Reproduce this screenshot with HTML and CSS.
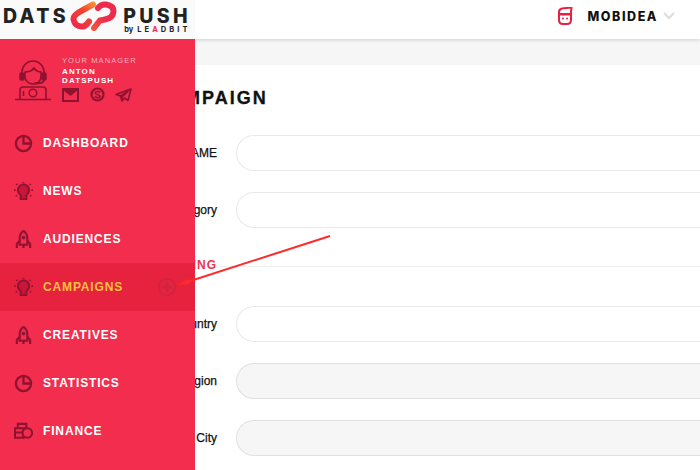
FILE: index.html
```html
<!DOCTYPE html>
<html lang="en">
<head>
<meta charset="utf-8">
<title>DatsPush</title>
<link rel="stylesheet" href="styles.css">
</head>
<body>
<svg class="defs" width="0" height="0" aria-hidden="true">
  <defs>
    <linearGradient id="logoGrad" gradientUnits="userSpaceOnUse" x1="8" y1="26" x2="26" y2="0">
      <stop offset="0" stop-color="#ee2b4c"/>
      <stop offset="0.55" stop-color="#f0432f"/>
      <stop offset="1" stop-color="#f7a23a"/>
    </linearGradient>
    <linearGradient id="logoGrad2" gradientUnits="userSpaceOnUse" x1="22" y1="28" x2="40" y2="0">
      <stop offset="0" stop-color="#f7563a"/>
      <stop offset="0.5" stop-color="#ee2b4c"/>
      <stop offset="1" stop-color="#ee2b4c"/>
    </linearGradient>
    <symbol id="i-pie" viewBox="0 0 20 20">
      <circle cx="10" cy="10" r="8" fill="none" stroke="currentColor" stroke-width="2.400"/>
      <path d="M10 2v8h8" fill="none" stroke="currentColor" stroke-width="2.400"/>
    </symbol>
    <symbol id="i-bulb" viewBox="0 0 20 20">
      <path d="M10 2.500a6 6 0 0 0-3.800 10.500l.8 1v4h6v-4l.8-1A6 6 0 0 0 10 2.500z" fill="#c4173a" stroke="currentColor" stroke-width="2"/>
      <path d="M10 0v1M2.500 2l1 1M17.500 2l-1 1M0 8.500h1.700M18.300 8.500H20M2 15l1-1M18 15l-1-1" stroke="currentColor" stroke-width="1.800" fill="none"/>
    </symbol>
    <symbol id="i-rocket" viewBox="0 0 20 20">
      <path d="M10 1C7 3 6 6 6 9v6.500h8V9c0-3-1-6-4-8z" fill="none" stroke="currentColor" stroke-width="2.200"/>
      <circle cx="10" cy="8" r="1.900" fill="currentColor"/>
      <path d="M6 11.500l-3 3V19M14 11.500l3 3V19M10 15v4" fill="none" stroke="currentColor" stroke-width="2.200"/>
    </symbol>
    <symbol id="i-coins" viewBox="0 0 20 20">
      <path d="M4 2h9v4.500H4zM1 6.500h9V11H1zM1 11h9v5.500H1z" fill="none" stroke="currentColor" stroke-width="2.200"/>
      <circle cx="14" cy="11.500" r="5" fill="#f22d4d" stroke="currentColor" stroke-width="2.200"/>
    </symbol>
  </defs>
</svg>

<header class="topbar">
  <div class="logo">
    <span class="logo-word">DATS</span>
    <svg class="logo-mark" viewBox="0 0 48 30" aria-hidden="true">
      <path d="M24 3.500L13 9.500Q4 14 4.500 18.500Q6 26 14 25.500Q17 25 20 20.500" fill="none" stroke="url(#logoGrad)" stroke-width="6" stroke-linecap="round"/>
      <path d="M29 7Q32 3 37 3.500Q44.500 4.500 44.500 10.500Q44 17 36 18.500L31 19.500L25 27" fill="none" stroke="url(#logoGrad2)" stroke-width="6" stroke-linecap="round"/>
    </svg>
    <div class="logo-right">
      <span class="logo-word">PUSH</span>
      <span class="logo-sub"><span class="by">by</span><span>LE<em>A</em>DBIT</span></span>
    </div>
  </div>
  <div class="account">
    <svg class="ninja" viewBox="0 0 16 18" aria-hidden="true">
      <path d="M2 5c0-2 1-3 3-3.500L14.500.5 14 5v8c0 2.500-1.500 4-4 4H6c-2.500 0-4-1.500-4-4z" fill="none" stroke="#e8203f" stroke-width="2"/>
      <path d="M2 6h12v2.500H2z" fill="#e8203f"/>
      <circle cx="6" cy="11.500" r="1" fill="#e8203f"/>
      <circle cx="10" cy="11.500" r="1" fill="#e8203f"/>
    </svg>
    <span class="account-name">MOBIDEA</span>
    <svg class="chevron" viewBox="0 0 12 8" aria-hidden="true"><path d="M1 1l5 5 5-5" fill="none" stroke="#dcdcdc" stroke-width="2"/></svg>
  </div>
</header>

<main class="content">
  <section class="card">
    <h1 class="title">NEW CAMPAIGN</h1>
    <div class="field"><label class="label">CAMPAIGN NAME</label><div class="input"></div></div>
    <div class="field"><label class="label">Category</label><div class="input"></div></div>
    <div class="section-head"><span class="section-text">TARGETING</span><span class="section-line"></span></div>
    <div class="field"><label class="label">Country</label><div class="input"></div></div>
    <div class="field"><label class="label">Region</label><div class="input input-off"></div></div>
    <div class="field"><label class="label">City</label><div class="input input-off"></div></div>
  </section>
</main>

<aside class="sidebar">
  <div class="manager">
    <svg class="avatar" viewBox="0 0 38 44" aria-hidden="true">
      <g fill="none" stroke="#8f1230" stroke-width="1.600">
        <path d="M8 20v-6a11 11 0 0 1 22 0v6"/>
        <path d="M11 14c3 0 7-1 9-4 2 3 5 4 7 4v5c0 4-4 7-8 7s-8-3-8-7z"/>
        <rect x="6" y="15" width="4" height="7" rx="1.500" fill="#8f1230"/>
        <rect x="28" y="15" width="4" height="7" rx="1.500" fill="#8f1230"/>
        <path d="M30 22c0 3-4 3.500-10 3.500" stroke-width="2"/>
        <path d="M6 41V32c0-2 1.500-3 3-3h20c1.500 0 3 1 3 3v9"/>
        <path d="M1 41.500h36"/>
        <circle cx="19" cy="35" r="3.800"/>
        <path d="M9.500 33v5"/>
      </g>
    </svg>
    <div class="manager-info">
      <div class="manager-role">YOUR MANAGER</div>
      <div class="manager-name">ANTON<br>DATSPUSH</div>
      <div class="manager-links">
        <svg class="link-mail" viewBox="0 0 17 14" aria-hidden="true"><path d="M1 1h15v12H1z" fill="none" stroke="#8f1230" stroke-width="2"/><path d="M1 2l7.500 6L16 2v-1H1z" fill="#8f1230"/></svg>
        <svg class="link-skype" viewBox="0 0 15 15" aria-hidden="true"><circle cx="7.500" cy="7.500" r="6" fill="none" stroke="#8f1230" stroke-width="2.200"/><path d="M10 5.500C9 4.300 5.200 4.200 5.200 6c0 2 4.800 1.200 4.800 3.300 0 1.800-4 1.700-5.200.3" fill="none" stroke="#8f1230" stroke-width="1.500"/></svg>
        <svg class="link-tg" viewBox="0 0 17 14" aria-hidden="true"><path d="M16 1L1 6.500l4.500 1.500L7 13l2.500-3 3.500 2.500zM5.500 8L13 3.500 7 9 7 13" fill="none" stroke="#8f1230" stroke-width="1.600" stroke-linejoin="round"/></svg>
      </div>
    </div>
  </div>
  <nav class="nav">
    <a class="nav-item"><svg class="nav-icon"><use href="#i-pie"/></svg><span>DASHBOARD</span></a>
    <a class="nav-item"><svg class="nav-icon"><use href="#i-bulb"/></svg><span>NEWS</span></a>
    <a class="nav-item"><svg class="nav-icon"><use href="#i-rocket"/></svg><span>AUDIENCES</span></a>
    <a class="nav-item active"><svg class="nav-icon"><use href="#i-bulb"/></svg><span>CAMPAIGNS</span>
      <svg class="nav-plus" viewBox="0 0 18 18" aria-hidden="true"><circle cx="9" cy="9" r="8" fill="none" stroke="#cc2542" stroke-width="1.500"/><path d="M9 4.500v9M4.500 9h9" stroke="#cc2542" stroke-width="2.500"/></svg>
    </a>
    <a class="nav-item"><svg class="nav-icon"><use href="#i-rocket"/></svg><span>CREATIVES</span></a>
    <a class="nav-item"><svg class="nav-icon"><use href="#i-pie"/></svg><span>STATISTICS</span></a>
    <a class="nav-item"><svg class="nav-icon"><use href="#i-coins"/></svg><span>FINANCE</span></a>
  </nav>
</aside>

<svg class="arrow" viewBox="0 0 700 470" aria-hidden="true">
  <path d="M184 283L330 236" stroke="#ff2a2a" stroke-width="2" fill="none"/>
  <path d="M177 285l11-6 2 5z" fill="#ff2a2a"/>
</svg>
</body>
</html>
```
FILE: styles.css
```css
* { box-sizing: border-box; }
html, body { margin: 0; height: 100%; }
body {
  width: 700px;
  height: 470px;
  overflow: hidden;
  background: #f6f6f6;
  font-family: "Liberation Sans", Arial, sans-serif;
  color: #111;
  position: relative;
}
.defs { position: absolute; }
.topbar {
  height: 39px;
  background: #fff;
  box-shadow: 0 1px 4px rgba(0, 0, 0, .16);
  display: flex;
  justify-content: space-between;
  position: relative;
}
.logo {
  width: 195px;
  display: flex;
  align-items: flex-start;
  padding: 1px 0 0 3px;
  background: #fafafa;
}
.logo-word {
  font-family: Inter, sans-serif;
  font-weight: 800;
  font-size: 19.500px;
  line-height: 18px;
  letter-spacing: 3.400px;
  color: #222;
  display: block;
  margin-top: 6px;
}
.logo-mark { width: 48px; height: 30px; margin: 0 6px 0 0; flex: none; }
.logo-right { display: flex; flex-direction: column; width: 70px; }
.logo-sub {
  display: flex;
  gap: 4px;
  font-family: Inter, sans-serif;
  font-size: 7.500px;
  font-weight: 700;
  line-height: 8px;
  letter-spacing: 3.050px;
  color: #222;
  white-space: nowrap;
  padding-left: 1px;
  margin-top: 1px;
}
.logo-sub .by { letter-spacing: 0; }
.logo-sub em { font-style: normal; color: #ee2b4c; }
.account {
  display: flex;
  align-items: center;
  padding-right: 25px;
  margin-top: -7px;
}
.ninja { width: 16px; height: 18px; margin-right: 15px; }
.account-name {
  font-family: Inter, sans-serif;
  font-weight: 800;
  font-size: 12.500px;
  letter-spacing: 1.550px;
  color: #111;
  margin-right: 5px;
}
.chevron { width: 12px; height: 8px; }

.content { padding-top: 26px; }
.card { background: #fff; height: 420px; padding-top: 23px; }
.title {
  margin: 0 0 27px;
  padding-left: 100px;
  font-size: 18px;
  line-height: 20px;
  font-weight: 700;
  letter-spacing: 2px;
  color: #111;
  white-space: nowrap;
  -webkit-text-stroke: .3px #111;
}
.field { display: flex; align-items: center; height: 36px; margin-bottom: 21px; }
.label {
  width: 217px;
  margin-right: 19px;
  text-align: right;
  font-size: 12px;
  font-weight: 400;
  white-space: nowrap;
  flex: none;
  -webkit-text-stroke: .25px #111;
}
.input {
  flex: 1;
  height: 36px;
  border: 1px solid #e8e9ec;
  border-radius: 18px 0 0 18px;
  border-right: 0;
  background: #fff;
}
.input-off { background: #f6f6f7; border-color: #dfe1e5; }
.section-head {
  display: flex;
  align-items: center;
  height: 14px;
  margin: 30px 0 34px;
  text-align: right;
  font-size: 12px;
  line-height: 14px;
  font-weight: 700;
  letter-spacing: 1px;
  color: #ee3351;
}
.section-text { width: 217px; flex: none; }
.section-line { flex: 1; height: 1px; background: #f0f0f0; margin-top: 3px; }

.sidebar {
  position: absolute;
  left: 0;
  top: 39px;
  width: 195px;
  height: 431px;
  background: #f22d4d;
}
.manager { height: 80px; display: flex; padding: 18px 0 0 14px; }
.avatar { width: 38px; height: 44px; flex: none; margin: 1px 10px 0 0; }
.manager-role {
  font-size: 7.500px;
  line-height: 8px;
  letter-spacing: 1.100px;
  color: #fbb0bc;
}
.manager-name {
  font-size: 8px;
  line-height: 8.500px;
  font-weight: 700;
  letter-spacing: 1.100px;
  color: #fff;
  margin-top: 3px;
}
.manager-links { display: flex; align-items: center; margin-top: 2px; gap: 10.500px; }
.link-mail { width: 17px; height: 14px; }
.link-skype { width: 15px; height: 15px; }
.link-tg { width: 17px; height: 14px; }
.nav { display: flex; flex-direction: column; }
.nav-item {
  height: 48px;
  display: flex;
  align-items: center;
  padding-left: 14px;
  color: #fff;
  font-size: 12px;
  font-weight: 700;
  letter-spacing: .85px;
}
.nav-icon { width: 19px; height: 19px; color: #8f1230; margin-right: 10px; flex: none; }
.nav-item.active { background: #e6223f; color: #fdc13e; }
.nav-plus { width: 18px; height: 18px; margin-left: auto; margin-right: 19px; }
.arrow { position: absolute; left: 0; top: 0; width: 700px; height: 470px; pointer-events: none; }
```
